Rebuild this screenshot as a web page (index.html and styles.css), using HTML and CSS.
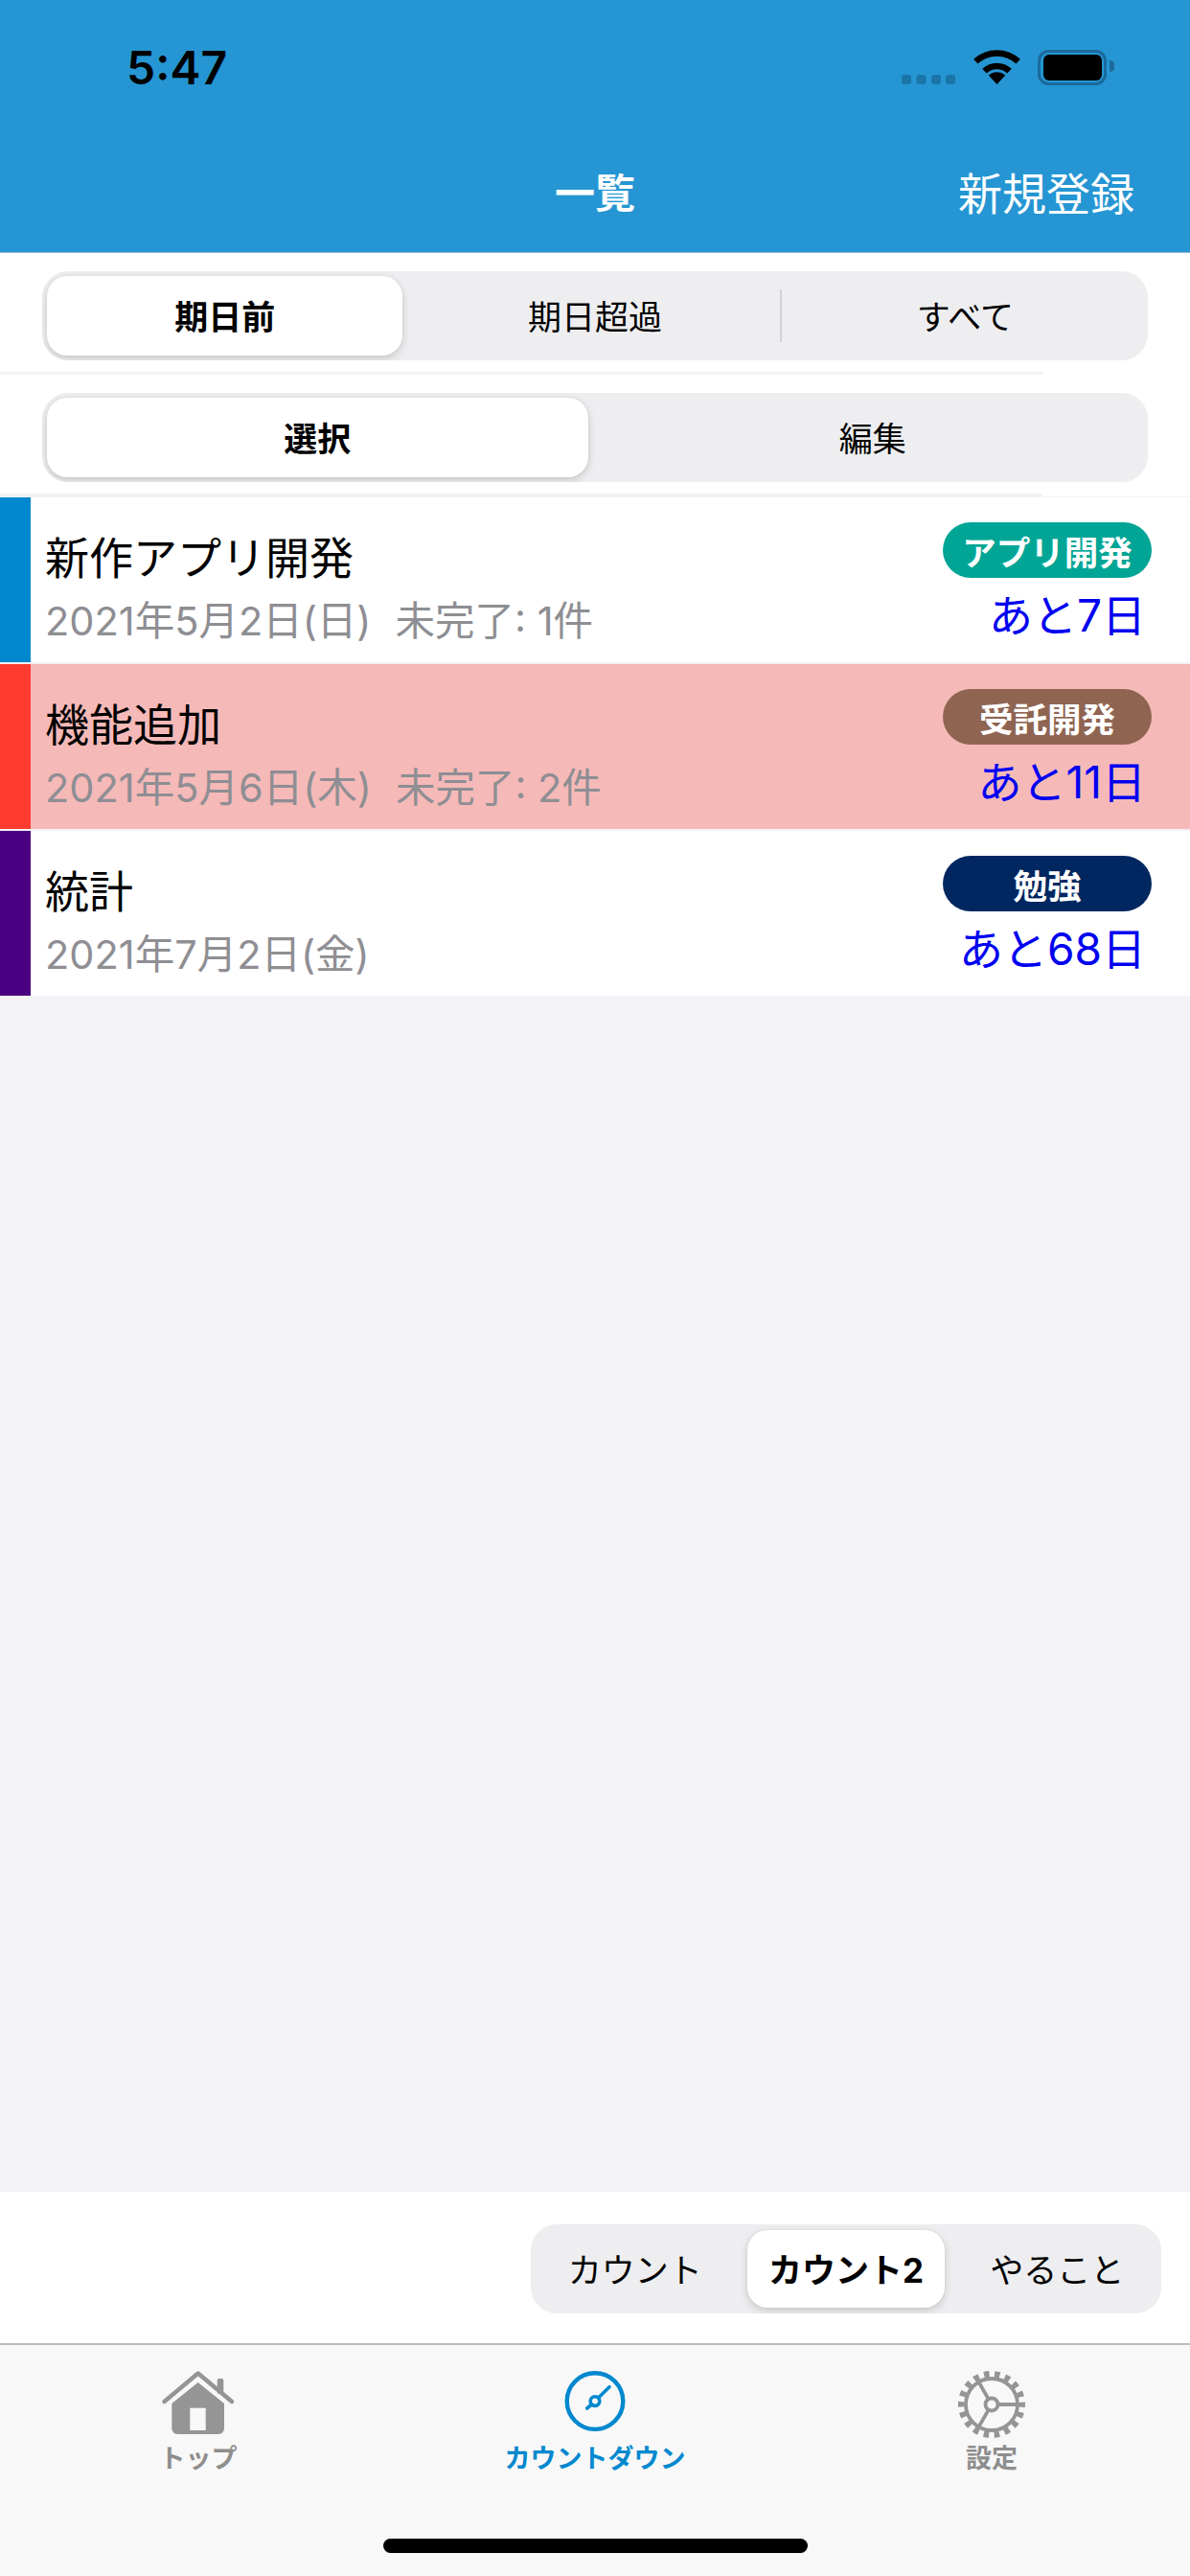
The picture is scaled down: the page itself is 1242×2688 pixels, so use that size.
FILE: index.html
```html
<!DOCTYPE html>
<html lang="ja">
<head>
  <meta charset="UTF-8">
  <meta name="viewport" content="width=device-width, initial-scale=1.0">
  <title>一覧</title>
  <link rel="stylesheet" href="styles.css">
</head>
<body>

  <header class="nav">
    <div class="status">
      <span class="time">5:47</span>
      <div class="status-icons">
        <svg class="dots" viewBox="0 0 56 36"><rect x="0" y="26" width="10" height="10" rx="3"/><rect x="15.500" y="26" width="10" height="10" rx="3"/><rect x="31" y="26" width="10" height="10" rx="3"/><rect x="46" y="26" width="10" height="10" rx="3"/></svg>
        <svg class="wifi" viewBox="0 0 49 36"><path class="wifi-arc" d="M2.300 12.200A32.500 32.500 0 0 1 46.700 12.200"/><path class="wifi-arc" d="M11.500 22.100A19 19 0 0 1 37.500 22.100"/><path d="M24.500 36L15.700 26.600A12.900 12.900 0 0 1 33.300 26.600Z"/></svg>
        <svg class="battery" viewBox="0 0 80 37"><rect class="battery-case" x="1.500" y="1.500" width="69" height="34" rx="10"/><rect x="6" y="5" width="61" height="27" rx="6"/><path class="battery-nub" d="M75 11a6 6 0 0 1 0 12Z"/></svg>
      </div>
    </div>
    <div class="nav-bar">
      <span></span>
      <h1 class="nav-title">一覧</h1>
      <a class="nav-action">新規登録</a>
    </div>
  </header>

  <section class="filter">
    <div class="segment segment-3">
      <div class="seg-item active">期日前</div>
      <div class="seg-item">期日超過</div>
      <div class="seg-item divided">すべて</div>
    </div>
  </section>

  <section class="filter">
    <div class="segment segment-2">
      <div class="seg-item active">選択</div>
      <div class="seg-item">編集</div>
    </div>
  </section>

  <main class="list">
    <div class="row">
      <div class="row-bar bar-blue"></div>
      <div class="row-text">
        <div class="row-title">新作アプリ開発</div>
        <div class="row-sub"><span>2021年5月2日(日)</span><span>未完了: 1件</span></div>
      </div>
      <div class="row-side">
        <span class="badge badge-teal">アプリ開発</span>
        <span class="days">あと7日</span>
      </div>
    </div>
    <div class="row row-late">
      <div class="row-bar bar-red"></div>
      <div class="row-text">
        <div class="row-title">機能追加</div>
        <div class="row-sub"><span>2021年5月6日(木)</span><span>未完了: 2件</span></div>
      </div>
      <div class="row-side">
        <span class="badge badge-brown">受託開発</span>
        <span class="days">あと11日</span>
      </div>
    </div>
    <div class="row">
      <div class="row-bar bar-purple"></div>
      <div class="row-text">
        <div class="row-title">統計</div>
        <div class="row-sub"><span>2021年7月2日(金)</span></div>
      </div>
      <div class="row-side">
        <span class="badge badge-navy">勉強</span>
        <span class="days">あと68日</span>
      </div>
    </div>
  </main>

  <section class="mode">
    <div class="segment segment-mode">
      <div class="seg-item">カウント</div>
      <div class="seg-item active">カウント2</div>
      <div class="seg-item">やること</div>
    </div>
  </section>

  <footer class="tabs">
    <div class="tab">
      <svg class="tab-icon" viewBox="-3 -4 80 80">
        <path class="home-roof" d="M1.500 32L36.700 2.500L72 32"/>
        <rect class="home-fill" x="56.700" y="8" width="6.600" height="16" rx="2"/>
        <path class="home-fill" d="M36.700 12L64 34V60a6 6 0 0 1-6 6H15.300a6 6 0 0 1-6-6V34Z"/>
        <rect class="home-door" x="28.300" y="38.700" width="16.400" height="23.300"/>
      </svg>
      <span class="tab-label">トップ</span>
    </div>
    <div class="tab tab-active">
      <svg class="tab-icon" viewBox="0 0 80 80">
        <circle class="compass" cx="40" cy="35.600" r="29.300"/>
        <circle class="compass-hub" cx="40" cy="35.600" r="4.800"/>
        <path class="compass-hub" d="M43.500 32L55 20.700M36.500 39L31.700 43"/>
      </svg>
      <span class="tab-label">カウントダウン</span>
    </div>
    <div class="tab">
      <svg class="tab-icon" viewBox="0 0 80 80">
        <circle class="gear-teeth" cx="40" cy="39" r="31.500"/>
        <circle class="gear-ring" cx="40" cy="39" r="27"/>
        <circle class="gear-ring" cx="40" cy="39" r="6.500"/>
        <path class="gear-ring" d="M46.500 39H67M36.700 33.400L26.500 15.600M36.700 44.600L26.500 62.400"/>
      </svg>
      <span class="tab-label">設定</span>
    </div>
    <div class="home-bar"></div>
  </footer>

</body>
</html>
```

FILE: styles.css
```css
body {
  font-family: "Inter", "Noto Sans CJK JP", sans-serif;
  background-color: #f2f2f7;
  margin: 0;
  padding: 0;
  height: 2688px;
  display: flex;
  flex-direction: column;
  overflow: hidden;
  color: #000;
}

/* nav */
.nav {
  background-color: #2596d3;
  height: 264px;
  box-sizing: border-box;
  border-bottom: 1px solid #8fb4cf;
  flex-shrink: 0;
}

.status {
  height: 140px;
  padding: 0 79px 0 132px;
  display: flex;
  align-items: center;
  justify-content: space-between;
}

.time {
  font-size: 48px;
  font-weight: 600;
}

.status-icons {
  display: flex;
  align-items: center;
}

.dots {
  width: 56px;
  height: 36px;
  margin-right: 19px;
  fill: #1b75a8;
}

.wifi {
  width: 49px;
  height: 36px;
  margin-right: 18px;
}

.wifi-arc {
  fill: none;
  stroke: #000;
  stroke-width: 6.5;
}

.battery {
  width: 80px;
  height: 37px;
}

.battery-case {
  fill: none;
  stroke: #1b6a9c;
  stroke-width: 3;
}

.battery-nub {
  fill: #1b6a9c;
}

.nav-bar {
  height: 117px;
  display: grid;
  grid-template-columns: 1fr auto 1fr;
  align-items: center;
  color: #fff;
}

.nav-title {
  margin: 0;
  font-size: 42px;
  font-weight: 700;
}

.nav-action {
  justify-self: end;
  padding-right: 58px;
  font-size: 46px;
}

/* segments */
.filter {
  background-color: #fff;
  height: 127px;
  padding-top: 19px;
  box-sizing: border-box;
  position: relative;
  flex-shrink: 0;
}

.filter::after {
  content: "";
  position: absolute;
  left: 0;
  bottom: 0;
  width: 1088px;
  height: 3px;
  background-color: #f2f2f7;
}

.segment {
  background-color: #eeeef0;
  border-radius: 27px;
  height: 93px;
  box-sizing: border-box;
  padding: 5px;
  display: grid;
  gap: 15px;
  overflow: hidden;
}

.filter .segment {
  margin: 0 44px;
}

.segment-3 {
  grid-template-columns: repeat(3, 1fr);
}

.segment-2 {
  grid-template-columns: repeat(2, 1fr);
}

.segment-mode {
  grid-template-columns: repeat(3, 1fr);
  width: 658px;
  padding: 6px;
}

.seg-item {
  display: flex;
  align-items: center;
  justify-content: center;
  font-size: 35px;
  padding-bottom: 2px;
  border-radius: 21px;
  position: relative;
}

.seg-item.active {
  background-color: #fff;
  font-weight: 700;
  box-shadow: 0 3px 8px rgba(0, 0, 0, 0.16), 0 0 3px rgba(0, 0, 0, 0.06);
}

.seg-item.divided::before {
  content: "";
  position: absolute;
  left: -8px;
  top: 14px;
  bottom: 14px;
  width: 2px;
  background-color: #d4d4d8;
}

/* rows */
.list {
  flex: 1;
  display: flex;
  flex-direction: column;
  gap: 2px;
  padding-top: 1px;
}

.row {
  height: 172px;
  background-color: #fff;
  display: flex;
}

.row-late {
  background-color: #f5b9b8;
}

.row-bar {
  width: 32px;
  flex-shrink: 0;
}

.bar-blue {
  background-color: #0088cf;
}

.bar-red {
  background-color: #ff3b30;
}

.bar-purple {
  background-color: #4b0082;
}

.row-text {
  flex: 1;
  padding: 30px 0 0 15px;
}

.row-title {
  font-size: 46px;
  line-height: 66px;
}

.row-sub {
  font-size: 41.500px;
  line-height: 66px;
  color: #8e8e93;
  display: flex;
  gap: 25px;
}

.row-side {
  width: 218px;
  margin-right: 40px;
  padding-top: 26px;
  display: flex;
  flex-direction: column;
  align-items: flex-end;
}

.badge {
  width: 218px;
  height: 58px;
  border-radius: 29px;
  color: #fff;
  font-size: 35.500px;
  font-weight: 700;
  display: flex;
  align-items: center;
  justify-content: center;
}

.badge-teal {
  background-color: #00a595;
}

.badge-brown {
  background-color: #8f6552;
}

.badge-navy {
  background-color: #00275f;
}

.days {
  font-size: 46px;
  line-height: 60px;
  margin-top: 9px;
  margin-right: 6px;
  color: #0000f0;
}

/* bottom */
.mode {
  background-color: #fff;
  height: 158px;
  padding: 34px 30px 0 0;
  box-sizing: border-box;
  display: flex;
  justify-content: flex-end;
  flex-shrink: 0;
}

.tabs {
  height: 243px;
  box-sizing: border-box;
  background-color: #f8f8f8;
  border-top: 2px solid #bdbdbd;
  display: grid;
  grid-template-columns: repeat(3, 1fr);
  position: relative;
  flex-shrink: 0;
}

.tab {
  display: flex;
  flex-direction: column;
  align-items: center;
  padding-top: 23px;
  color: #8e8e8e;
}

.tab-active {
  color: #0088cf;
}

.tab-icon {
  width: 80px;
  height: 80px;
}

.tab-label {
  font-size: 27px;
  line-height: 30px;
  font-weight: 700;
  margin-top: 1px;
}

.home-roof {
  fill: none;
  stroke: #959595;
  stroke-width: 4.5;
  stroke-linecap: round;
  stroke-linejoin: round;
}

.home-fill {
  fill: #959595;
}

.home-door {
  fill: #f8f8f8;
}

.compass {
  fill: none;
  stroke: #0088cf;
  stroke-width: 4.4;
}

.compass-hub {
  fill: none;
  stroke: #0088cf;
  stroke-width: 3.6;
  stroke-linecap: round;
}

.gear-teeth {
  fill: none;
  stroke: #959595;
  stroke-width: 7;
  stroke-dasharray: 5.500 5.500;
  stroke-dashoffset: 2.750;
}

.gear-ring {
  fill: none;
  stroke: #959595;
  stroke-width: 3.8;
}

.home-bar {
  position: absolute;
  left: 400px;
  top: 202px;
  width: 443px;
  height: 15px;
  border-radius: 8px;
  background-color: #000;
}
```
